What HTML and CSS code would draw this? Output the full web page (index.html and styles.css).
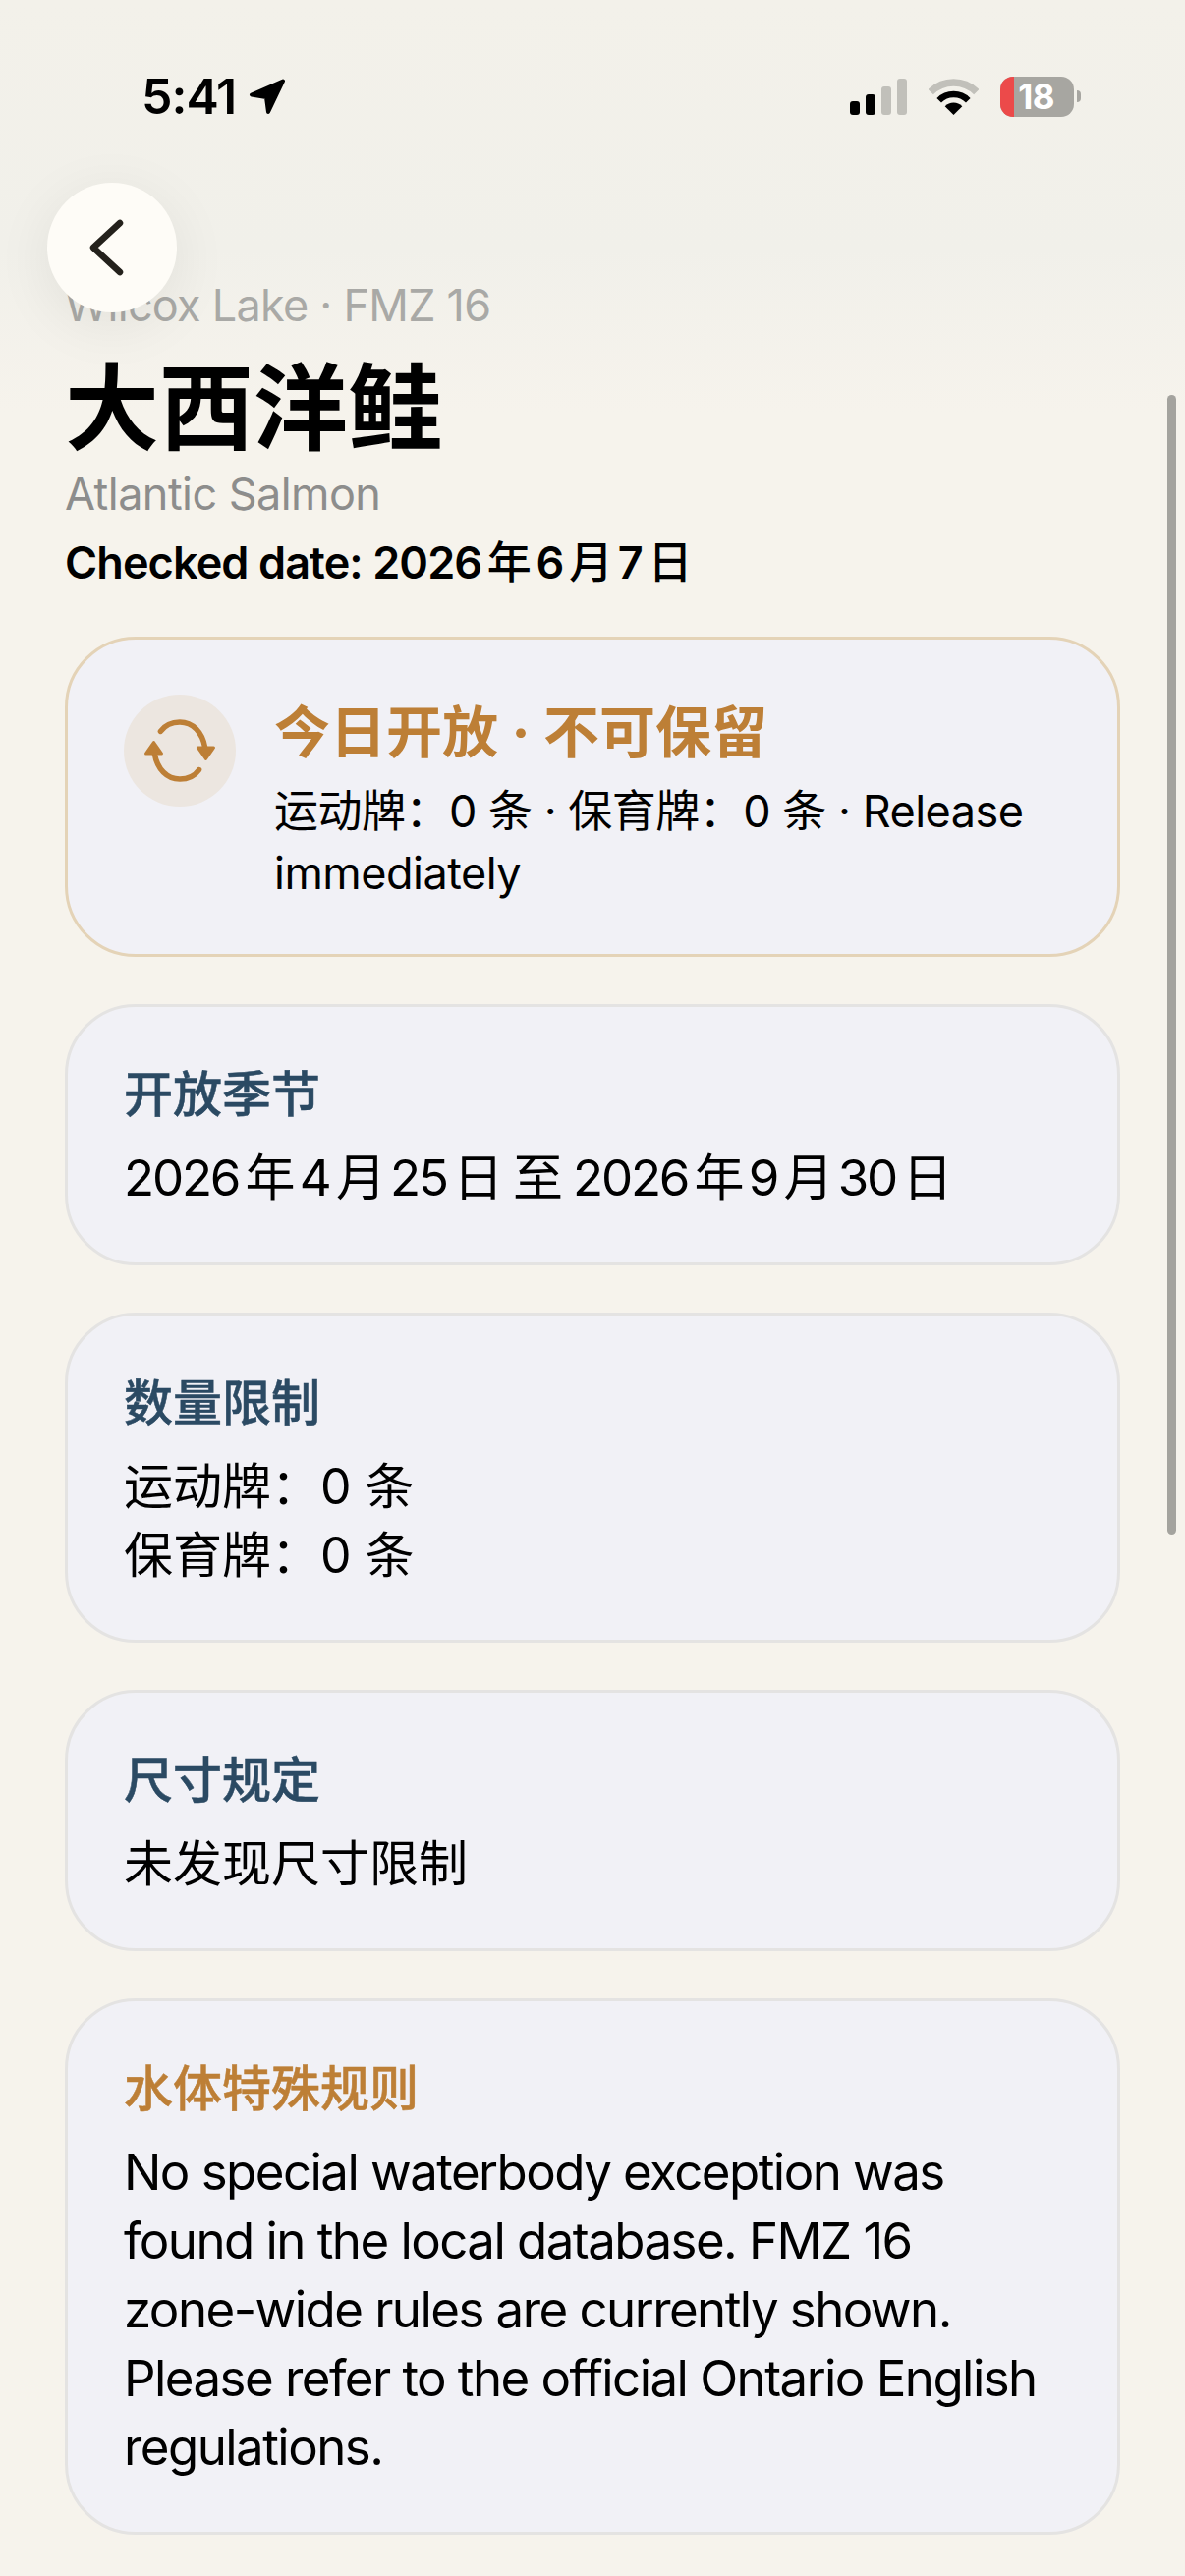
FILE: index.html
```html
<!DOCTYPE html>
<html lang="zh-Hans">
<head>
<meta charset="utf-8">
<title>大西洋鲑</title>
<link rel="stylesheet" href="styles.css">
</head>
<body>
<div class="page">
  <div class="top-fade"></div>
  <header class="status">
    <div class="status-left">
      <span class="time">5:41</span>
      <svg class="loc" viewBox="0 0 40 39"><path d="M36 3.500 L4 17.500 L19 20 L21 35 Z" fill="#000" stroke="#000" stroke-width="4" stroke-linejoin="round"/></svg>
    </div>
    <div class="status-right">
      <div class="signal">
        <i class="bar bar-1"></i><i class="bar bar-2"></i><i class="bar bar-3"></i><i class="bar bar-4"></i>
      </div>
      <svg class="wifi" viewBox="0 0 51 37">
        <path d="M2.200 13.700 A33 33 0 0 1 48.800 13.700" fill="none" stroke="#c1c0ba" stroke-width="7.500"/>
        <path d="M10.700 22.200 A21 21 0 0 1 40.300 22.200" fill="none" stroke="#000" stroke-width="6.500"/>
        <path d="M25.500 37 L16.700 28.200 A12.500 12.500 0 0 1 34.300 28.200 Z" fill="#000"/>
      </svg>
      <div class="battery">
        <div class="battery-body"><span class="battery-fill"></span><span class="battery-num">18</span></div>
        <span class="battery-tip"></span>
      </div>
    </div>
  </header>

  <section class="head">
    <p class="place">Wilcox Lake · FMZ 16</p>
    <h1 class="title">大西洋鲑</h1>
    <p class="latin">Atlantic Salmon</p>
    <p class="checked">Checked date: 2026<span class="cjk-mid">年</span>6<span class="cjk-mid">月</span>7<span class="cjk-mid">日</span></p>
  </section>

  <button class="back" aria-label="返回">
    <svg viewBox="0 0 36 58"><path d="M31 4 L4 29 L31 54" fill="none" stroke="#24211c" stroke-width="6.500" stroke-linecap="round" stroke-linejoin="round"/></svg>
  </button>

  <main class="cards">
    <article class="card card-status">
      <div class="status-icon">
        <svg viewBox="0 0 72 66">
          <g fill="none" stroke="#bd7f36" stroke-width="5.500" stroke-linecap="round">
            <path d="M16.400 13.400 C21 7 28 4 36 4 C49 4 59 14 61.700 30"/>
            <path d="M55.600 52.600 C51 59 44 62 36 62 C23 62 13 52 10.300 36"/>
          </g>
          <g fill="#bd7f36" stroke="#bd7f36" stroke-width="3" stroke-linejoin="round">
            <path d="M54.500 30 L70.500 30 L62.500 41.500 Z"/>
            <path d="M17.500 36 L1.500 36 L9.500 24.500 Z"/>
          </g>
        </svg>
      </div>
      <div class="status-copy">
        <h2 class="status-title">今日开放 · 不可保留</h2>
        <p class="status-sub">运动牌：0 条 · 保育牌：0 条 · Release immediately</p>
      </div>
    </article>

    <article class="card">
      <h3 class="label">开放季节</h3>
      <p class="body body-date">2026年4月25日 至 2026年9月30日</p>
    </article>

    <article class="card">
      <h3 class="label">数量限制</h3>
      <p class="body body-cjk">运动牌：0 条</p>
      <p class="body body-cjk">保育牌：0 条</p>
    </article>

    <article class="card">
      <h3 class="label">尺寸规定</h3>
      <p class="body body-cjk">未发现尺寸限制</p>
    </article>

    <article class="card">
      <h3 class="label label-warm">水体特殊规则</h3>
      <p class="body">No special waterbody exception was found in the local database. FMZ 16 <span class="nowrap">zone-wide</span> rules are currently shown. Please refer to the official Ontario English regulations.</p>
    </article>
  </main>

  <div class="scrollbar"></div>
</div>
</body>
</html>
```

FILE: styles.css
```css
* { box-sizing: border-box; }
html, body { margin: 0; padding: 0; }
body {
  width: 1206px;
  height: 2622px;
  overflow: hidden;
  background: #f6f3ec;
  font-family: Inter, "Noto Sans CJK SC", sans-serif;
  color: #000;
  text-autospace: normal;
}
p, h1, h2, h3 { margin: 0; }
.page { position: relative; width: 1206px; height: 2622px; overflow: hidden; }
.nowrap { white-space: nowrap; }

.top-fade {
  position: absolute;
  left: 0; right: 0; top: 0;
  height: 420px;
  background: linear-gradient(#f3f1ea 0, #f1f0ea 60%, #f6f3ec 100%);
}

.status {
  position: relative;
  display: flex;
  justify-content: space-between;
  align-items: center;
  height: 196px;
  padding: 0 106px 0 144px;
}
.status-left { display: flex; align-items: center; gap: 12px; height: 39px; }
.time { font-size: 50px; font-weight: 600; line-height: 37px; letter-spacing: -1px; }
.loc { width: 40px; height: 39px; display: block; }
.status-right { display: flex; align-items: center; gap: 22px; }
.signal { display: flex; align-items: flex-end; gap: 6px; height: 37px; }
.bar { display: block; width: 10px; border-radius: 3px; background: #c1c0ba; }
.bar-1 { height: 14px; background: #000; }
.bar-2 { height: 21px; background: #000; }
.bar-3 { height: 29px; }
.bar-4 { height: 37px; }
.wifi { width: 51px; height: 37px; display: block; }
.battery { display: flex; align-items: center; gap: 3px; }
.battery-body {
  position: relative;
  width: 75px;
  height: 41px;
  border-radius: 13px;
  overflow: hidden;
  background: #a7a6a1;
  display: flex;
  align-items: center;
  justify-content: flex-end;
  padding-right: 20px;
}
.battery-fill { position: absolute; left: 0; top: 0; bottom: 0; width: 18%; background: #ec4a4a; }
.battery-num { position: relative; color: #fff; font-size: 35px; font-weight: 700; line-height: 41px; letter-spacing: -0.5px; }
.battery-tip { width: 4px; height: 12px; border-radius: 0 6px 6px 0; background: #a7a6a1; }

.back {
  position: absolute;
  z-index: 2;
  left: 48px;
  top: 186px;
  width: 132px;
  height: 132px;
  border: 0;
  padding: 0 11px 0 0;
  border-radius: 50%;
  background: #fefcf7;
  box-shadow: 0 12px 60px rgba(0, 0, 0, 0.07);
  display: flex;
  align-items: center;
  justify-content: center;
}
.back svg { width: 36px; height: 58px; display: block; }

.head { position: relative; padding: 90px 66px 0; }
.place { font-size: 45px; line-height: 50px; color: #a9a9a6; letter-spacing: -0.75px; }
.title { font-size: 96px; line-height: 130px; font-weight: 700; color: #000; margin-top: 14px; }
.latin { font-size: 45px; line-height: 50px; color: #8d8d8c; letter-spacing: -0.55px; margin-top: -2px; }
.checked { font-size: 45px; line-height: 50px; font-weight: 600; letter-spacing: -0.9px; margin-top: 20px; }
.cjk-mid { font-weight: 500; }

.cards {
  position: relative;
  display: flex;
  flex-direction: column;
  gap: 48px;
  padding: 50px 66px 0;
}
.card {
  background: #f1f1f6;
  border: 3px solid #e4e3e2;
  border-radius: 72px;
  padding: 54px 57px 51px;
}
.card-status {
  display: flex;
  align-items: flex-start;
  gap: 39px;
  border-color: #e4d3b7;
  padding: 56px 57px 51px;
}
.status-icon {
  flex: none;
  width: 114px;
  height: 114px;
  border-radius: 50%;
  background: #ece6e0;
  display: flex;
  align-items: center;
  justify-content: center;
}
.status-icon svg { width: 72px; height: 66px; display: block; }
.status-copy { padding-top: 4px; }
.status-title { font-size: 57px; line-height: 70px; font-weight: 700; color: #bd7f36; }
.status-sub { font-size: 45px; line-height: 63px; letter-spacing: -0.5px; margin-top: 13px; }
.label { font-size: 50px; line-height: 70px; font-weight: 500; -webkit-text-stroke: 0.5px currentColor; color: #2b4a63; margin-bottom: 15px; }
.label-warm { color: #bd7f36; }
.body { font-size: 51px; line-height: 70px; letter-spacing: -1.55px; }
.body-cjk { font-size: 50px; letter-spacing: 0; }
.body-date { letter-spacing: -2.200px; }
.scrollbar {
  position: absolute;
  left: 1188px;
  top: 402px;
  width: 9px;
  height: 1160px;
  border-radius: 5px;
  background: #a4a39e;
}
```
